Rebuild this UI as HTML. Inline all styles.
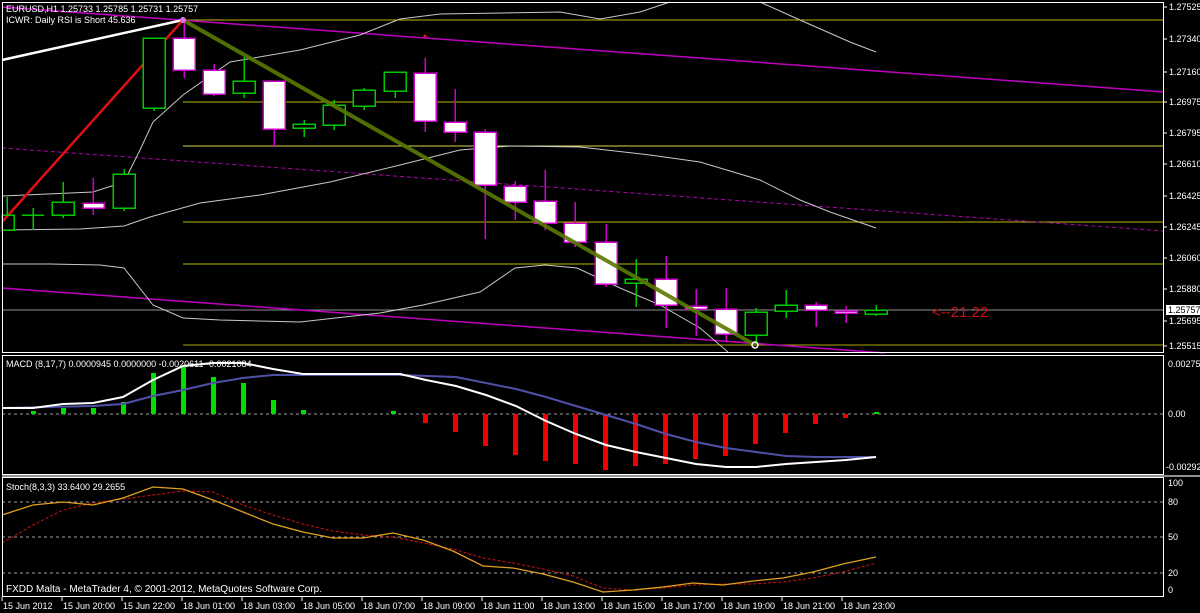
<!DOCTYPE html>
<html><head><meta charset="utf-8"><style>
html,body{margin:0;padding:0;background:#000;width:1200px;height:613px;overflow:hidden}
svg{display:block}
text{font-family:"Liberation Sans",sans-serif;font-size:9px;fill:#fff}
</style></head><body>
<svg width="1200" height="613" viewBox="0 0 1200 613" xmlns="http://www.w3.org/2000/svg" shape-rendering="crispEdges">
<rect width="1200" height="613" fill="#000"/>
<!-- main panel lines -->
<g fill="none" shape-rendering="auto">
<line x1="183" y1="20" x2="1164" y2="20" stroke="#b8b800"/>
<line x1="183" y1="102" x2="1164" y2="102" stroke="#b8b800"/>
<line x1="183" y1="146" x2="1164" y2="146" stroke="#d8d850"/>
<line x1="183" y1="222" x2="1164" y2="222" stroke="#b8b800"/>
<line x1="183" y1="264" x2="1164" y2="264" stroke="#b8b800"/>
<line x1="183" y1="345" x2="1164" y2="345" stroke="#a8a800"/>
<line x1="2" y1="310" x2="1164" y2="310" stroke="#909090"/>
<line x1="2" y1="7" x2="1164" y2="92" stroke="#c000c0" stroke-width="1.5"/>
<line x1="2" y1="148" x2="1164" y2="231" stroke="#b000b0" stroke-dasharray="4,3"/>
<line x1="2" y1="288" x2="885" y2="353" stroke="#c000c0" stroke-width="1.5"/>
<polyline stroke="#c8c8c8" points="2,196 93,192 124,182 140,150 153,122 183,95 230,62 300,50 360,35 400,19 440,14 560,12 600,19 640,12 670,2"/>
<polyline stroke="#c8c8c8" points="760,2 800,20 850,42 876,52"/>
<polyline stroke="#c8c8c8" points="2,230 80,229 124,226 150,217 200,203 260,195 330,182 400,165 460,150 510,146 580,147 650,155 700,162 760,180 800,200 830,212 876,228"/>
<polyline stroke="#c8c8c8" points="2,264 50,264 100,265 124,268 153,305 183,318 220,320 300,322 380,313 423,305 480,292 515,268 545,265 577,268 620,288 660,305 700,328 728,352"/>
<line x1="2" y1="60" x2="183" y2="20" stroke="#fff" stroke-width="2.5"/>
<line x1="2" y1="222" x2="183" y2="20" stroke="#e01010" stroke-width="2.5"/>
</g>
<!-- candles -->
<g stroke-width="1.5">
<g stroke="#00c800" fill="none">
<line x1="7" y1="197" x2="7" y2="215"/><rect x="2" y="215" width="12" height="15"/>
<line x1="33" y1="208" x2="33" y2="230"/><line x1="22" y1="215" x2="44" y2="215"/>
<line x1="63" y1="182" x2="63" y2="218"/><rect x="52" y="202" width="22" height="13" fill="#000"/>
<line x1="124" y1="169" x2="124" y2="211"/><rect x="113" y="174" width="22" height="34" fill="#000"/>
<line x1="154" y1="38" x2="154" y2="111"/><rect x="143" y="38" width="22" height="70" fill="#000"/>
<line x1="244" y1="57" x2="244" y2="98"/><rect x="233" y="81" width="22" height="12" fill="#000"/>
<line x1="304" y1="120" x2="304" y2="137"/><rect x="293" y="124" width="22" height="4" fill="#000"/>
<line x1="334" y1="100" x2="334" y2="130"/><rect x="323" y="105" width="22" height="20" fill="#000"/>
<line x1="364" y1="88" x2="364" y2="110"/><rect x="353" y="90" width="22" height="16" fill="#000"/>
<line x1="395" y1="72" x2="395" y2="98"/><rect x="384" y="72" width="22" height="19" fill="#000"/>
<line x1="636" y1="259" x2="636" y2="307"/><rect x="625" y="279" width="22" height="4" fill="#000"/>
<line x1="756" y1="308" x2="756" y2="344"/><rect x="745" y="312" width="22" height="23" fill="#000"/>
<line x1="786" y1="290" x2="786" y2="318"/><rect x="775" y="305" width="22" height="6" fill="#000"/>
<line x1="876" y1="305" x2="876" y2="316"/><rect x="865" y="310" width="22" height="4" fill="#000"/>
</g>
<g stroke="#d000d0" fill="#fff">
<line x1="93" y1="178" x2="93" y2="215"/><rect x="83" y="203" width="21" height="5"/>
<line x1="184" y1="20" x2="184" y2="78"/><rect x="173" y="38" width="22" height="32"/>
<line x1="214" y1="64" x2="214" y2="96"/><rect x="203" y="70" width="22" height="24"/>
<line x1="274" y1="81" x2="274" y2="147"/><rect x="263" y="81" width="22" height="48"/>
<line x1="425" y1="58" x2="425" y2="132"/><rect x="414" y="73" width="22" height="48"/>
<line x1="455" y1="89" x2="455" y2="142"/><rect x="444" y="122" width="22" height="10"/>
<line x1="485" y1="129" x2="485" y2="239"/><rect x="474" y="132" width="22" height="53"/>
<line x1="515" y1="181" x2="515" y2="220"/><rect x="504" y="186" width="22" height="16"/>
<line x1="545" y1="170" x2="545" y2="230"/><rect x="534" y="201" width="22" height="22"/>
<line x1="575" y1="202" x2="575" y2="247"/><rect x="564" y="223" width="22" height="19"/>
<line x1="606" y1="224" x2="606" y2="287"/><rect x="595" y="242" width="22" height="42"/>
<line x1="666" y1="256" x2="666" y2="328"/><rect x="655" y="279" width="22" height="26"/>
<line x1="696" y1="289" x2="696" y2="336"/><rect x="685" y="306" width="22" height="3"/>
<line x1="726" y1="288" x2="726" y2="342"/><rect x="715" y="309" width="22" height="25"/>
<line x1="816" y1="302" x2="816" y2="327"/><rect x="805" y="305" width="22" height="5"/>
<line x1="846" y1="306" x2="846" y2="323"/><rect x="835" y="311" width="22" height="2"/>
</g>
</g>
<line x1="183" y1="20" x2="755" y2="345" stroke="#5a7a00" stroke-width="4" shape-rendering="auto" opacity="0.9"/>
<circle cx="183" cy="20" r="3" fill="#e070e0"/>
<circle cx="755" cy="345" r="3" fill="none" stroke="#fff" stroke-width="1.5" shape-rendering="auto"/>
<circle cx="425" cy="36" r="1.5" fill="#e01010"/>
<text x="6" y="12">EURUSD,H1  1.25733 1.25785 1.25731 1.25757</text>
<text x="6" y="23">ICWR: Daily RSI is Short 45.636</text>
<text x="932" y="317" style="font-size:15px;fill:#d01010">&lt;--21:22</text>
<!-- MACD -->
<line x1="2" y1="414" x2="1164" y2="414" stroke="#a0a0a0" stroke-dasharray="3,3"/>
<g fill="#00e000">
<rect x="31" y="411" width="5" height="3"/><rect x="61" y="408" width="5" height="6"/><rect x="91" y="408" width="5" height="6"/><rect x="121" y="402" width="5" height="12"/><rect x="151" y="373" width="5" height="41"/><rect x="181" y="367" width="5" height="47"/><rect x="211" y="377" width="5" height="37"/><rect x="241" y="383" width="5" height="31"/><rect x="271" y="400" width="5" height="14"/><rect x="301" y="410" width="5" height="4"/><rect x="391" y="411" width="5" height="3"/><rect x="874" y="412" width="5" height="2"/>
</g>
<g fill="#f00000">
<rect x="423" y="414" width="5" height="9"/><rect x="453" y="414" width="5" height="18"/><rect x="483" y="414" width="5" height="32"/><rect x="513" y="414" width="5" height="41"/><rect x="543" y="414" width="5" height="47"/><rect x="573" y="414" width="5" height="50"/><rect x="603" y="414" width="5" height="56"/><rect x="633" y="414" width="5" height="52"/><rect x="663" y="414" width="5" height="50"/><rect x="693" y="414" width="5" height="45"/><rect x="723" y="414" width="5" height="42"/><rect x="753" y="414" width="5" height="30"/><rect x="783" y="414" width="5" height="19"/><rect x="813" y="414" width="5" height="10"/><rect x="843" y="414" width="5" height="4"/>
</g>
<g fill="none" shape-rendering="auto">
<polyline stroke="#5050a8" stroke-width="2" points="2,408 93,406 123,404 153,396 183,390 213,383 243,378 273,375 400,375 456,377 486,383 516,389 546,397 576,406 606,415 636,424 666,434 696,442 726,448 756,452 786,456 816,457 876,457"/>
<polyline stroke="#fff" stroke-width="2" points="2,408 33,408 63,404 93,403 123,397 153,380 183,366 213,363 243,363 273,369 303,374 400,374 426,380 456,386 486,395 516,406 546,421 576,434 606,445 636,452 666,458 696,464 726,467 756,467 786,464 816,462 846,460 876,457"/>
</g>
<text x="6" y="367">MACD  (8,17,7) 0.0000945 0.0000000 -0.0020611 -0.0021084</text>
<!-- Stoch -->
<g stroke="#a0a0a0" stroke-dasharray="3,3">
<line x1="2" y1="502" x2="1164" y2="502"/><line x1="2" y1="537" x2="1164" y2="537"/><line x1="2" y1="573" x2="1164" y2="573"/>
</g>
<g fill="none" shape-rendering="auto">
<polyline stroke="#d01010" stroke-dasharray="3,2" points="2,543 33,525 63,510 93,503 123,499 153,495 183,491 213,492 243,505 273,515 303,524 333,531 363,535 393,537 423,543 453,549 483,558 513,563 543,569 573,576 603,588 633,590 663,588 693,585 723,584 753,584 783,582 813,578 843,572 876,563"/>
<polyline stroke="#e0a020" stroke-width="1.3" points="2,515 33,505 63,502 93,505 123,498 153,487 183,489 213,500 243,512 273,524 303,532 333,538 363,538 393,533 423,540 453,551 483,566 513,568 543,574 573,582 603,592 633,590 663,587 693,583 723,585 753,581 783,578 813,572 843,564 876,557"/>
</g>
<text x="6" y="490">Stoch(8,3,3) 33.6400 29.2655</text>
<text x="6" y="592" style="font-size:10px">FXDD Malta - MetaTrader 4, © 2001-2012, MetaQuotes Software Corp.</text>
<!-- frames -->
<g fill="none" stroke="#fff">
<rect x="2.5" y="2.5" width="1161" height="350"/>
<rect x="2.5" y="355.5" width="1161" height="119"/>
<rect x="2.5" y="477.5" width="1161" height="119"/>
</g>
<rect x="2" y="475" width="1198" height="2" fill="#909090"/>
<!-- right axis -->
<g>
<text x="1169" y="10">1.27525</text><text x="1169" y="42">1.27340</text><text x="1169" y="75">1.27160</text><text x="1169" y="105">1.26975</text><text x="1169" y="136">1.26795</text><text x="1169" y="167">1.26610</text><text x="1169" y="199">1.26425</text><text x="1169" y="230">1.26245</text><text x="1169" y="261">1.26060</text><text x="1169" y="292">1.25880</text>
<rect x="1166" y="305" width="34" height="10" fill="#fff"/><text x="1168" y="313" style="fill:#000">1.25757</text>
<text x="1169" y="324">1.25695</text><text x="1169" y="349">1.25515</text>
<text x="1168" y="367">0.002750</text><text x="1168" y="417">0.00</text><text x="1166" y="470">-0.00292</text>
<text x="1168" y="486">100</text><text x="1168" y="505">80</text><text x="1168" y="540">50</text><text x="1168" y="576">20</text><text x="1168" y="593">0</text>
</g>
<g stroke="#fff">
<line x1="1164" y1="7" x2="1167" y2="7"/><line x1="1164" y1="39" x2="1167" y2="39"/><line x1="1164" y1="72" x2="1167" y2="72"/><line x1="1164" y1="102" x2="1167" y2="102"/><line x1="1164" y1="133" x2="1167" y2="133"/><line x1="1164" y1="164" x2="1167" y2="164"/><line x1="1164" y1="196" x2="1167" y2="196"/><line x1="1164" y1="227" x2="1167" y2="227"/><line x1="1164" y1="258" x2="1167" y2="258"/><line x1="1164" y1="289" x2="1167" y2="289"/><line x1="1164" y1="321" x2="1167" y2="321"/><line x1="1164" y1="346" x2="1167" y2="346"/>
</g>
<!-- time axis -->
<g stroke="#fff">
<line x1="2" y1="597" x2="2" y2="601"/><line x1="62" y1="597" x2="62" y2="601"/><line x1="122" y1="597" x2="122" y2="601"/><line x1="182" y1="597" x2="182" y2="601"/><line x1="242" y1="597" x2="242" y2="601"/><line x1="302" y1="597" x2="302" y2="601"/><line x1="362" y1="597" x2="362" y2="601"/><line x1="422" y1="597" x2="422" y2="601"/><line x1="482" y1="597" x2="482" y2="601"/><line x1="542" y1="597" x2="542" y2="601"/><line x1="602" y1="597" x2="602" y2="601"/><line x1="662" y1="597" x2="662" y2="601"/><line x1="722" y1="597" x2="722" y2="601"/><line x1="782" y1="597" x2="782" y2="601"/><line x1="842" y1="597" x2="842" y2="601"/>
</g>
<g>
<text x="3" y="609">15 Jun 2012</text><text x="63" y="609">15 Jun 20:00</text><text x="123" y="609">15 Jun 22:00</text><text x="183" y="609">18 Jun 01:00</text><text x="243" y="609">18 Jun 03:00</text><text x="303" y="609">18 Jun 05:00</text><text x="363" y="609">18 Jun 07:00</text><text x="423" y="609">18 Jun 09:00</text><text x="483" y="609">18 Jun 11:00</text><text x="543" y="609">18 Jun 13:00</text><text x="603" y="609">18 Jun 15:00</text><text x="663" y="609">18 Jun 17:00</text><text x="723" y="609">18 Jun 19:00</text><text x="783" y="609">18 Jun 21:00</text><text x="843" y="609">18 Jun 23:00</text>
</g>
</svg>
</body></html>
